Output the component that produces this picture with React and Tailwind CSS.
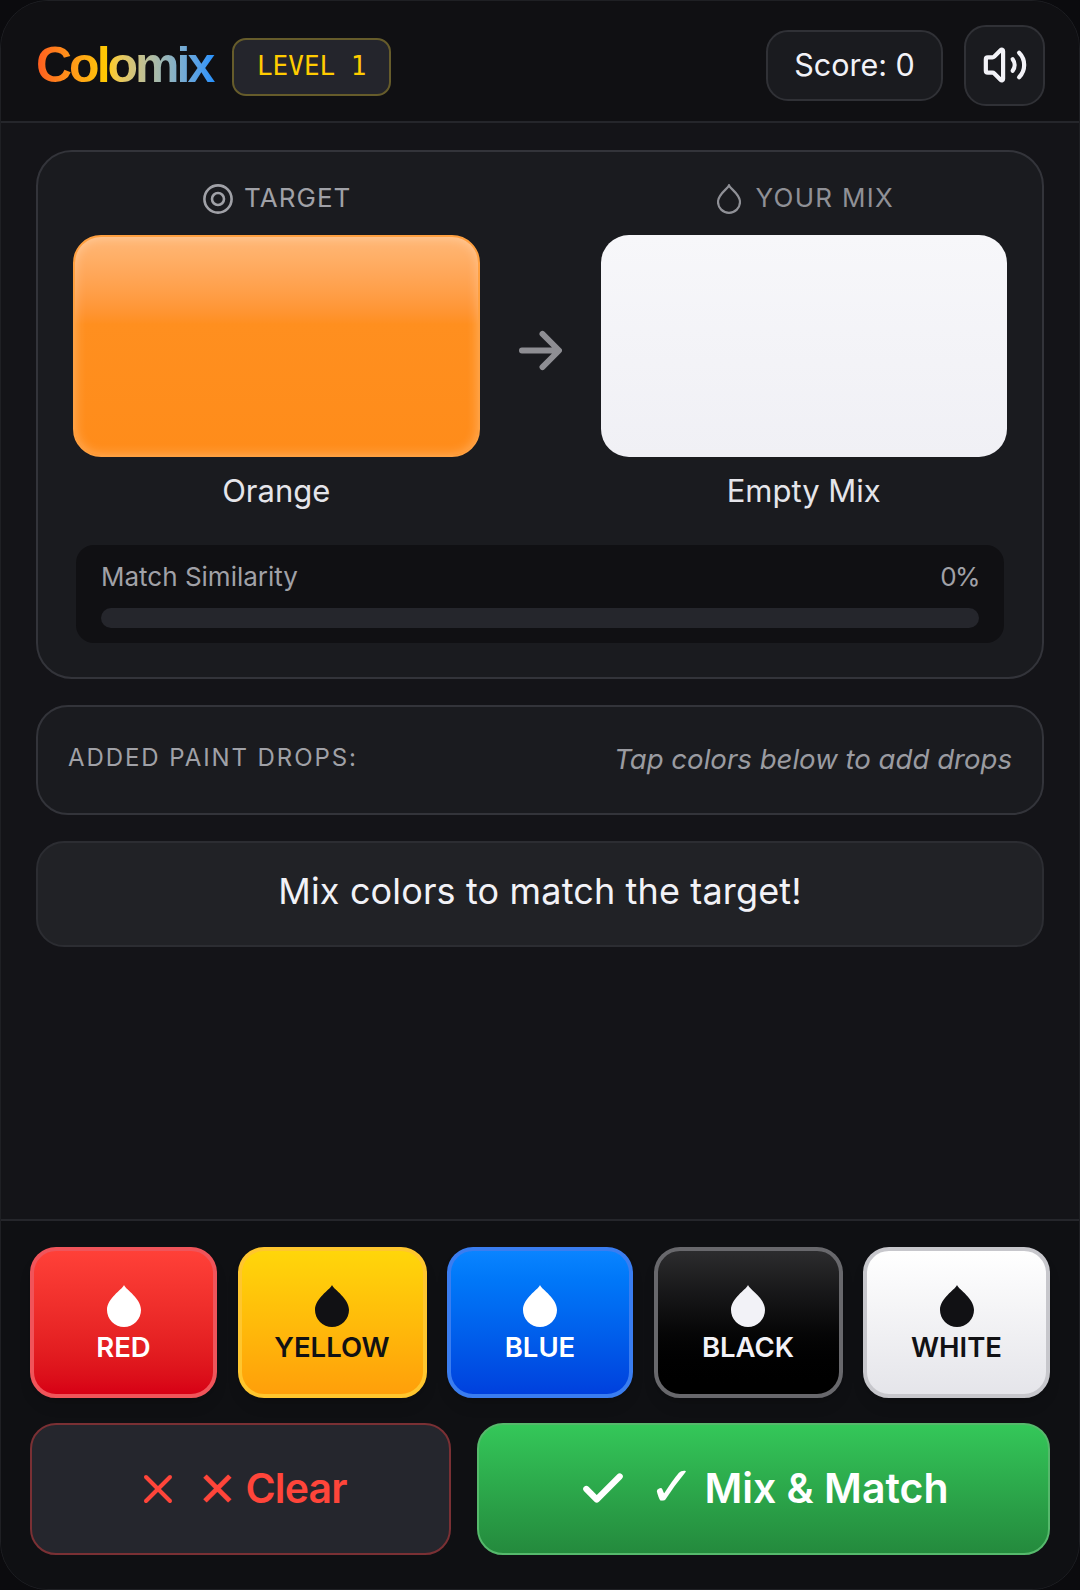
import { Volume2, Check, X } from "lucide-react";

const font = { fontFamily: "Inter, 'Noto Sans', sans-serif" };

function Drop({ className }) {
  return (
    <svg viewBox="0 0 34 42" className={className} fill="currentColor">
      <path d="M17 0 C19 5 34 13 34 25 A17 17 0 0 1 0 25 C0 13 15 5 17 0 Z" />
    </svg>
  );
}

function OutlineDrop() {
  return (
    <svg viewBox="0 0 24 30" className="w-[24px] h-[30px] mt-1 text-[#8f9096]" fill="none" stroke="currentColor" strokeWidth="2.2">
      <path d="M12 1.5 C13.5 5 23 10 23 18 A11 10.8 0 0 1 1 18 C1 10 10.5 5 12 1.5 Z" />
    </svg>
  );
}

function TargetIcon() {
  return (
    <svg viewBox="0 0 30 30" className="w-[30px] h-[30px] mt-1 ml-[2px] text-[#a0a1a7]" fill="none" stroke="currentColor" strokeWidth="2.6">
      <circle cx="15" cy="15" r="13.6" />
      <circle cx="15" cy="15" r="6" />
    </svg>
  );
}

const paints = [
  { name: "RED", w: "w-[187px]", cls: "border-[#f0545a] bg-gradient-to-b from-[#ff4038] to-[#d70015] text-white", drop: "text-white" },
  { name: "YELLOW", w: "w-[189px]", cls: "border-[#ffc62e] bg-gradient-to-b from-[#ffd60a] to-[#ff9f0a] text-[#111114]", drop: "text-[#111114]" },
  { name: "BLUE", w: "w-[186px]", cls: "border-[#3a7df0] bg-gradient-to-b from-[#0a84ff] to-[#0040dd] text-white", drop: "text-white" },
  { name: "BLACK", w: "w-[189px]", cls: "border-[#68686c] bg-gradient-to-b from-[#2c2c2e] to-black text-[#f2f2f7]", drop: "text-[#f2f2f7]" },
  { name: "WHITE", w: "w-[187px]", cls: "border-[#c7c7cc] bg-gradient-to-b from-white to-[#e5e5ea] text-[#111114]", drop: "text-[#111114]" },
];

function PaintButton({ paint }) {
  return (
    <button className={`${paint.w} h-[151px] pt-[3px] rounded-[26px] border-[4px] flex flex-col items-center justify-center shadow-lg ${paint.cls}`}>
      <Drop className={`w-[34px] h-[42px] ${paint.drop}`} />
      <span className="text-[27.5px] leading-[34px] font-semibold mt-[3px]">{paint.name}</span>
    </button>
  );
}

export default function App() {
  return (
    <div style={font} className="w-[1080px] h-[1590px] bg-[#0b0b0e] overflow-hidden">
      <div className="w-full h-full rounded-[48px] border border-[#1f2024] bg-[#141418] flex flex-col overflow-hidden">
        {/* Header */}
        <header className="h-[122px] shrink-0 bg-[#101013] border-b-2 border-[#25262b] flex items-center justify-between pl-[35px] pr-[34px] pt-[8px]">
          <div className="flex items-center gap-[16px] mt-[3px]">
            <h1 className="font-['Liberation_Sans'] text-[50px] leading-none font-bold tracking-[-0.06em] bg-gradient-to-r from-[#ff5a1f] via-[#ffcc00] via-40% to-[#1e90ff] bg-clip-text text-transparent pb-1 pr-1">
              Colomix
            </h1>
            <div className="w-[159px] h-[58px] rounded-[14px] border-2 border-[#665c2b] bg-[#24252c] flex items-center justify-center text-[#ffcc00] text-[26px] font-['DejaVu_Sans_Mono']">
              LEVEL 1
            </div>
          </div>
          <div className="flex items-center gap-[21px]">
            <div className="w-[177px] h-[71px] rounded-[22px] border-2 border-[#303136] bg-[#1a1b1f] flex items-center justify-center text-[#f2f2f7] text-[30.5px]">
              Score: 0
            </div>
            <button className="w-[81px] h-[81px] rounded-[22px] border-2 border-[#303136] bg-[#1a1b1f] flex items-center justify-center text-[#f2f2f7]">
              <Volume2 size={46} strokeWidth={2.2} />
            </button>
          </div>
        </header>

        {/* Main */}
        <main className="flex-1 px-[35px] pt-[27px]">
          <section className="h-[529px] rounded-[36px] border-2 border-[#33343a] bg-[#1a1b1f] px-[35px] pt-[27px]">
            <div className="flex gap-[121px]">
              <div className="w-[407px] flex flex-col items-center">
                <div className="flex items-center gap-[11px] h-[36px] text-[#a0a1a7] text-[26px] tracking-[0.04em]">
                  <TargetIcon />
                  <span>TARGET</span>
                </div>
                <div className="w-full h-[222px] mt-[20px] rounded-[28px] bg-[#ff8c1a] border-2 border-[#ffa040] bg-gradient-to-b from-[#ffb877] via-[#ff8f1f] via-40% to-[#ff8c1a] shadow-[inset_0_0_12px_rgba(255,255,255,0.3)]" />
                <div className="mt-[14px] text-[31px] leading-[40px] text-[#e5e5ea]">Orange</div>
              </div>
              <div className="w-[407px] flex flex-col items-center relative">
                <div className="flex items-center gap-[14px] h-[36px] ml-[4px] text-[#8f9096] text-[26px] tracking-[0.05em]">
                  <OutlineDrop />
                  <span>YOUR MIX</span>
                </div>
                <div className="w-full h-[222px] mt-[20px] rounded-[28px] bg-gradient-to-b from-[#f7f7fa] to-[#f0f0f5]" />
                <div className="mt-[14px] text-[31px] leading-[40px] text-[#e5e5ea]">Empty Mix</div>
                {/* arrow between swatches */}
                <svg viewBox="0 0 44 44" className="absolute left-[-82px] top-[150px] w-[43px] h-[43px] text-[#8e8e93]" fill="none" stroke="currentColor" strokeWidth="6" strokeLinecap="round" strokeLinejoin="round">
                  <path d="M3 22 H40 M24 5 L41 22 L24 39" />
                </svg>
              </div>
            </div>
            <div className="mt-[34px] mx-[3px] h-[98px] rounded-[18px] bg-[#101013] px-[25px] pt-[16px]">
              <div className="flex justify-between text-[#a0a1a7] text-[26px] leading-[32px]">
                <span>Match Similarity</span>
                <span className="tracking-[-0.06em]">0%</span>
              </div>
              <div className="mt-[15px] h-[20px] rounded-full bg-[#25262c]" />
            </div>
          </section>

          <section className="mt-[26px] h-[110px] rounded-[32px] border-2 border-[#33343a] bg-[#1a1b1f] pl-[30px] pr-[30px] flex items-center justify-between">
            <span className="text-[#a0a1a7] text-[24px] tracking-[0.08em] -mt-1">ADDED PAINT DROPS:</span>
            <span className="text-[#9a9ba1] text-[27.6px] italic">Tap colors below to add drops</span>
          </section>

          <section className="mt-[26px] h-[106px] pb-[6px] rounded-[28px] border-2 border-[#2c2d32] bg-[#212226] flex items-center justify-center text-[#f2f2f7] text-[36px] tracking-[0.004em]">
            Mix colors to match the target!
          </section>
        </main>

        {/* Palette */}
        <footer className="h-[370px] shrink-0 bg-[#0f1013] border-t-2 border-[#25262b] px-[29px] pt-[26px]">
          <div className="flex justify-between">
            {paints.map((p) => (
              <PaintButton key={p.name} paint={p} />
            ))}
          </div>
          <div className="flex gap-[26px] mt-[25px]">
            <button className="w-[421px] h-[132px] rounded-[26px] border-2 border-[#7a3034] bg-[#25262d] flex items-center justify-center gap-[15px] text-[#ff453a] text-[41px] font-semibold tracking-[-0.02em]">
              <X size={48} strokeWidth={2} />
              <span className="flex items-center gap-[9px]">
                <span className="text-[48px] leading-none font-medium">✕</span>
                <span>Clear</span>
              </span>
            </button>
            <button className="flex-1 h-[132px] rounded-[26px] border-2 border-[#56b96c] bg-gradient-to-b from-[#34c759] to-[#248a3d] flex items-center justify-center gap-[20px] text-white text-[41px] font-semibold">
              <Check size={50} strokeWidth={3} />
              <span className="flex items-center gap-[9px]">
                <span className="font-['DejaVu_Sans'] font-normal text-[56px] leading-none -mt-1">✓</span>
                <span>Mix &amp; Match</span>
              </span>
            </button>
          </div>
        </footer>
      </div>
    </div>
  );
}
